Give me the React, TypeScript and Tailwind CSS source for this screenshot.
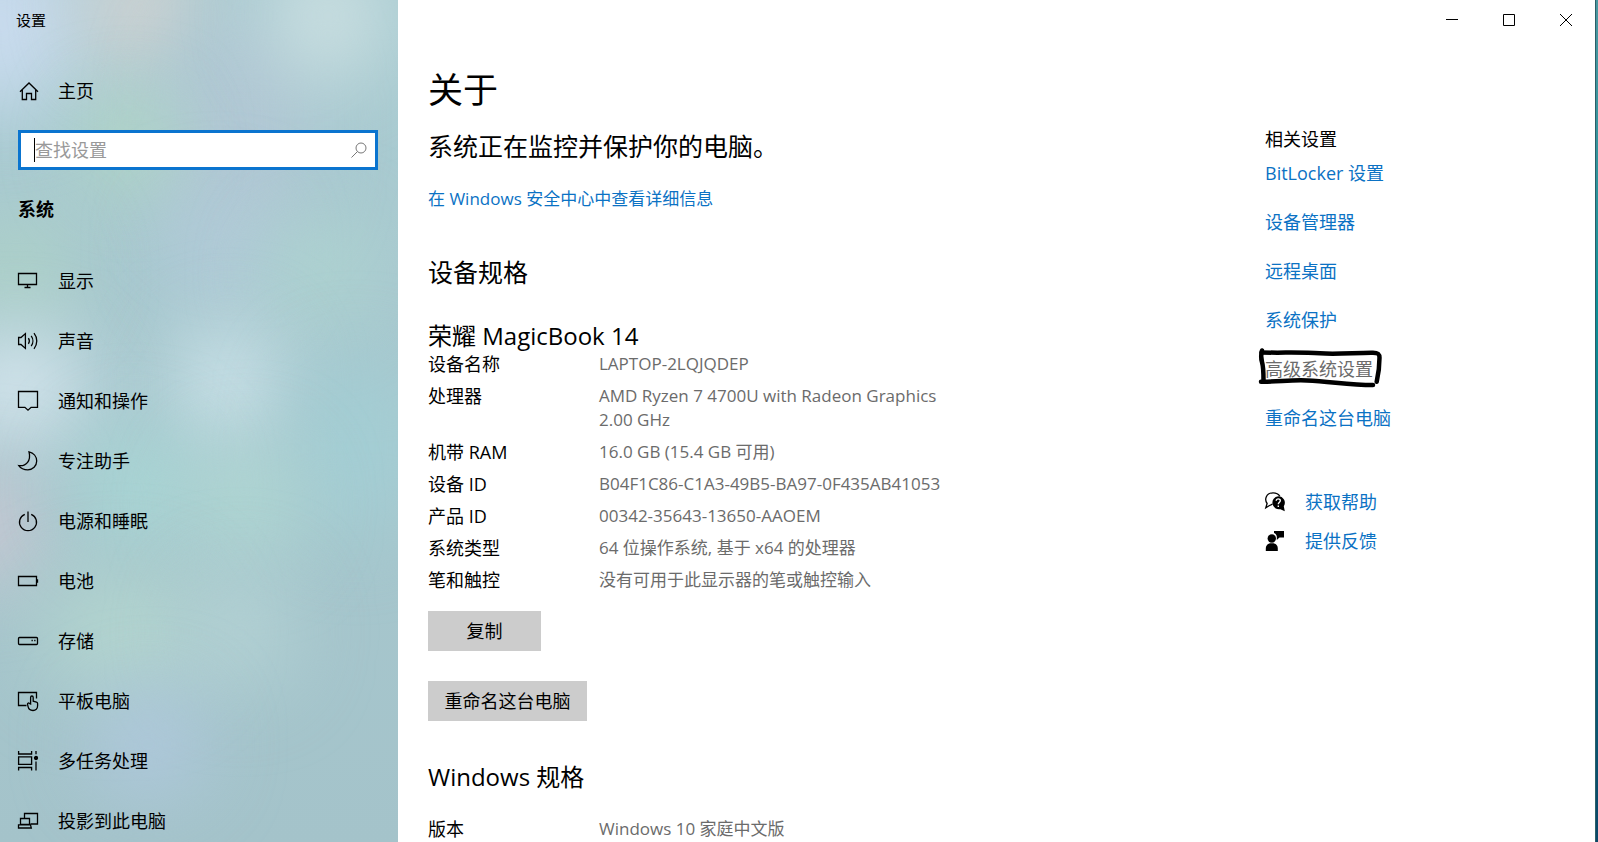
import type React from "react"
import { useState } from "react"

interface NavItem {
  id: string
  label: string
  icon: React.ReactNode
}

interface Spec {
  label: string
  value: string
}

function Icon({ children }: { children: React.ReactNode }) {
  return (
    <svg className="h-5 w-5 shrink-0 overflow-visible" viewBox="0 0 20 20" fill="none" stroke="currentColor" strokeWidth="1.3" aria-hidden="true">
      {children}
    </svg>
  )
}

const navItems: NavItem[] = [
  {
    id: "display",
    label: "显示",
    icon: <path d="M.5 2.5h18v11H.5zM9.5 13.5v3M6.5 16.5h6" />,
  },
  {
    id: "sound",
    label: "声音",
    icon: (
      <>
        <path d="M.6 6.5H3L7.4 2.6v14.8L3 13.5H.6z" />
        <path d="M10.4 7.2c1.1 1.6 1.1 4 0 5.6M13.2 4.8c2.2 3 2.2 7.4 0 10.4M16 2.2c3.7 4.6 3.7 11 0 15.6" />
      </>
    ),
  },
  {
    id: "notifications",
    label: "通知和操作",
    icon: <path d="M.5.5h19v15.8h-6.4L10 19.2l-3.1-2.9H.5z" />,
  },
  {
    id: "focus",
    label: "专注助手",
    icon: <path d="M11 .8c4.6 1 7.7 4.8 7.7 9.3 0 4.9-4 8.7-8.8 8.7-3.9 0-7.3-1.6-9.1-4.2C8.4 15.6 13.2 9.5 11 .8z" />,
  },
  {
    id: "power",
    label: "电源和睡眠",
    icon: <path d="M6.8 3.3a8.5 8.5 0 1 0 6.4 0M10 .5v10.5" />,
  },
  {
    id: "battery",
    label: "电池",
    icon: <path d="M.5 5.5h18v9H.5zM19.5 8.2v3.6" />,
  },
  {
    id: "storage",
    label: "存储",
    icon: (
      <>
        <rect x=".5" y="6.5" width="19" height="7" rx="1" />
        <path d="M13.5 9.5h1.3M16.2 9.5h1.3" />
      </>
    ),
  },
  {
    id: "tablet",
    label: "平板电脑",
    icon: (
      <>
        <path d="M8.5 14.5h-8v-13h18v6" />
        <path d="M12.6 13V6.4c0-1.9 2.6-1.9 2.6 0v3.8l3.3.9c.8.2 1.1.8 1.1 1.5v2.2c0 2.8-2 4.7-4.6 4.7-2.8 0-4.5-1.6-5-4.1l-.5-2.3c-.2-1.2 1.2-1.5 1.9-.6z" />
      </>
    ),
  },
  {
    id: "multitask",
    label: "多任务处理",
    icon: (
      <>
        <path d="M.6 5.8h13v7.6H.6zM.6 0v3h13V0M.6 19.5v-3h13v3M18 0v3.2M18 10.5v9" />
        <circle cx="18" cy="7" r="1.5" fill="currentColor" />
      </>
    ),
  },
  {
    id: "project",
    label: "投影到此电脑",
    icon: <path d="M6.5 7.5v-5h13V13h-7M2.5 13.5v-6h9v6zM.5 13.8h12l.8 3.200H.5z" />,
  },
]

const deviceSpecs: Spec[] = [
  { label: "设备名称", value: "LAPTOP-2LQJQDEP" },
  { label: "处理器", value: "AMD Ryzen 7 4700U with Radeon Graphics 2.00 GHz" },
  { label: "机带 RAM", value: "16.0 GB (15.4 GB 可用)" },
  { label: "设备 ID", value: "B04F1C86-C1A3-49B5-BA97-0F435AB41053" },
  { label: "产品 ID", value: "00342-35643-13650-AAOEM" },
  { label: "系统类型", value: "64 位操作系统, 基于 x64 的处理器" },
  { label: "笔和触控", value: "没有可用于此显示器的笔或触控输入" },
]

const windowsSpecs: Spec[] = [{ label: "版本", value: "Windows 10 家庭中文版" }]

const relatedLinks = [
  { label: "BitLocker 设置" },
  { label: "设备管理器" },
  { label: "远程桌面" },
  { label: "系统保护" },
  { label: "高级系统设置", marked: true },
  { label: "重命名这台电脑" },
]

// Soft colour spots of the translucent sidebar
const spots = [
  "-top-16 -left-20 h-44 w-40 bg-[#c9dbee]",
  "-top-12 left-22 h-28 w-26 bg-[#d6d3d2]",
  "top-4 left-44 h-56 w-32 bg-[#b1c7d4]",
  "-top-12 left-68 h-32 w-28 bg-[#cce0e2]",
  "top-26 left-22 h-20 w-20 bg-[#b5dcc0]",
  "top-56 -left-10 h-24 w-28 bg-[#aed2c6]",
  "top-50 left-42 h-24 w-24 bg-[#b4cbdb]",
  "top-56 left-68 h-24 w-24 bg-[#b0d6d1]",
  "top-84 -left-14 h-26 w-36 bg-[#d6e6ee]",
  "top-82 left-44 h-28 w-26 bg-[#cfe5ec]",
  "top-90 left-75 h-44 w-28 bg-[#a3ced4]",
  "top-118 -left-16 h-28 w-26 bg-[#ccc8d4]",
  "top-108 left-20 h-28 w-28 bg-[#a9d8d6]",
  "top-112 left-48 h-28 w-26 bg-[#b1d9d4]",
  "top-144 left-10 h-28 w-40 bg-[#b3d5cf]",
  "top-144 left-48 h-28 w-24 bg-[#b5d3d5]",
  "top-174 left-24 h-24 w-26 bg-[#b1c9e0]",
]

// Pen outline around the marked link
function PenMark() {
  return (
    <svg
      className="pointer-events-none absolute -top-3 -left-2 h-12 w-32 text-black"
      viewBox="0 0 128 48"
      fill="none"
      stroke="currentColor"
      strokeWidth="4.5"
      strokeLinecap="round"
      strokeLinejoin="round"
      aria-hidden="true"
    >
      <path d="M5 5.5C4 9 3.5 12 5 17s1.5 12 1.5 18.5" />
      <path d="M4.5 7.5C25 8 45 7 63 8.3s36-.8 53-.6c5 0 6.5 1 6.5 5 0 9-1 16-2.8 24" />
      <path d="M4 36.7c16 .3 30-2 46-1.2 24 1 42 4.5 66 4.5" />
    </svg>
  )
}

function SpecTable({ specs }: { specs: Spec[] }) {
  return (
    <table className="w-full max-w-[520px] table-fixed text-left text-lg/6">
      <tbody>
        {specs.map((spec) => (
          <tr key={spec.label} className="align-top">
            <th scope="row" className="w-[171px] pb-2 font-normal">
              {spec.label}
            </th>
            <td className="pb-2 text-[17px]/6 text-[#6b6b6b]">{spec.value}</td>
          </tr>
        ))}
      </tbody>
    </table>
  )
}

function Sidebar() {
  const [query, setQuery] = useState("")

  return (
    <aside className="relative isolate w-[398px] shrink-0 overflow-hidden bg-linear-to-b from-[#aaccd2] to-[#a4c3ca]">
      <div className="absolute inset-0 -z-10" aria-hidden="true">
        {spots.map((spot) => (
          <div key={spot} className={`absolute rounded-full blur-2xl ${spot}`} />
        ))}
      </div>
      <div className="flex h-10 items-center px-4 text-[15px]">设置</div>
      <a href="#home" className="mt-[27px] flex h-12 items-center gap-5 px-[18px] text-lg">
        <Icon>
          <path d="M2 10.8 11 2l9 8.8M4.3 9v9.5h4.200v-6h5v6h4.200V9" />
        </Icon>
        主页
      </a>
      <div className="mx-[18px] mt-[15px] mr-5 flex h-10 items-center border-3 border-[#0a74cf] bg-white pr-2 pl-[13px]">
        <span className="h-6 w-px bg-black" />
        <input
          type="text"
          aria-label="查找设置"
          value={query}
          onChange={(e) => setQuery(e.target.value)}
          placeholder="查找设置"
          className="h-full min-w-0 flex-1 bg-transparent text-lg outline-none placeholder:text-[#999999]"
        />
        <svg className="h-4 w-4 text-[#777777]" viewBox="0 0 16 16" fill="none" stroke="currentColor" aria-hidden="true">
          <circle cx="10" cy="6" r="5" />
          <path d="M6.5 9.5.5 15.5" />
        </svg>
      </div>
      <h2 className="mt-[25px] px-[18px] text-lg/7 font-bold">系统</h2>
      <nav className="mt-7">
        {navItems.map((item) => (
          <a key={item.id} href={`#${item.id}`} className="flex h-15 items-center gap-5 px-[18px] text-lg">
            <Icon>{item.icon}</Icon>
            {item.label}
          </a>
        ))}
      </nav>
    </aside>
  )
}

function WindowControls() {
  return (
    <div className="flex h-10 justify-end pr-px">
      <button type="button" aria-label="最小化" className="flex w-[57px] items-center justify-center">
        <svg className="h-3 w-3" viewBox="0 0 12 12" stroke="currentColor">
          <path d="M0 5.5h12" />
        </svg>
      </button>
      <button type="button" aria-label="最大化" className="flex w-[57px] items-center justify-center">
        <svg className="h-3 w-3" viewBox="0 0 12 12" fill="none" stroke="currentColor">
          <path d="M.5.5h11v11H.5z" />
        </svg>
      </button>
      <button type="button" aria-label="关闭" className="flex w-[57px] items-center justify-center">
        <svg className="h-3 w-3" viewBox="0 0 12 12" stroke="currentColor">
          <path d="M0 0l12 12M12 0 0 12" />
        </svg>
      </button>
    </div>
  )
}

function About() {
  return (
    <main className="min-w-0 flex-1">
      <h1 className="mt-6 text-[35px]/[52px]">关于</h1>
      <p className="mt-[14px] text-[25px]/8">系统正在监控并保护你的电脑。</p>
      <a href="#security" className="mt-[25px] block text-[17px]/6 text-[#0b72c4]">
        在 Windows 安全中心中查看详细信息
      </a>
      <h2 className="mt-[45px] text-[25px]/8">设备规格</h2>
      <h3 className="mt-8 text-2xl/8">荣耀 MagicBook 14</h3>
      <SpecTable specs={deviceSpecs} />
      <button type="button" className="mt-[11px] block h-10 w-[113px] bg-[#cccccc] text-lg">
        复制
      </button>
      <button type="button" className="mt-[30px] block h-10 w-[159px] bg-[#cccccc] text-lg">
        重命名这台电脑
      </button>
      <h2 className="mt-10 mb-6 text-2xl/8">Windows 规格</h2>
      <SpecTable specs={windowsSpecs} />
    </main>
  )
}

function Related() {
  return (
    <aside className="w-[330px] shrink-0 pt-[87px] text-lg/6">
      <h2>相关设置</h2>
      <ul className="mt-[10px] space-y-[25px] text-[#0b72c4]">
        {relatedLinks.map((link) => (
          <li key={link.label}>
            {link.marked ? (
              <a href="#related" className="relative inline-block text-[#6b6b6b]">
                {link.label}
                <PenMark />
              </a>
            ) : (
              <a href="#related" className="inline-block">
                {link.label}
              </a>
            )}
          </li>
        ))}
      </ul>
      <ul className="mt-[60px] space-y-[15px] text-[#0b72c4]">
        <li>
          <a href="#help" className="flex items-center gap-5">
            <svg className="h-5 w-5 overflow-visible text-black" viewBox="0 0 20 20" aria-hidden="true">
              <path
                d="M7.500 12.200 4.500 13.500.8 15.800l1.300-4.300C-.8 7.500 1 1 8 .9c3.500 0 5.600 1.200 6.800 3.300"
                fill="none"
                stroke="currentColor"
                strokeWidth="1.3"
              />
              <path d="M13.2 4.2a6.6 6.6 0 0 1 5.6 10.1l1 5-4.400-2.100a6.6 6.6 0 1 1-2.200-13z" fill="currentColor" />
              <path d="M11.2 8.8c.2-2.600 4.200-2.500 4.100 0-.1 1.400-2 1.500-2 3.400M13.300 13.400v1.600" fill="none" stroke="white" strokeWidth="1.4" />
            </svg>
            获取帮助
          </a>
        </li>
        <li>
          <a href="#feedback" className="flex items-center gap-5">
            <svg className="h-5 w-5 overflow-visible text-black" viewBox="0 0 20 20" fill="currentColor" aria-hidden="true">
              <circle cx="6.8" cy="7.5" r="4.2" />
              <path d="M.8 20v-2.5c0-3.2 2.300-5.300 5-5.300h2c2.800 0 5 2.100 5 5.300V20z" />
              <path d="M9 0h10v6.500h-4.500L11.800 9V5.500C11.500 3.500 10.500 2.500 9 2z" />
            </svg>
            提供反馈
          </a>
        </li>
      </ul>
    </aside>
  )
}

export default function App() {
  return (
    <div className="flex h-screen overflow-hidden bg-white font-['Open_Sans','Noto_Sans_CJK_SC',sans-serif] text-black" lang="zh-CN">
      <Sidebar />
      <div className="min-w-0 flex-1">
        <WindowControls />
        <div className="flex pl-[30px]">
          <About />
          <Related />
        </div>
      </div>
      <div className="w-[3px] shrink-0 border-l border-[#2b5f68] bg-linear-to-b from-[#4a97a0] via-[#0c9198] via-35% to-[#0b4668]" />
    </div>
  )
}
